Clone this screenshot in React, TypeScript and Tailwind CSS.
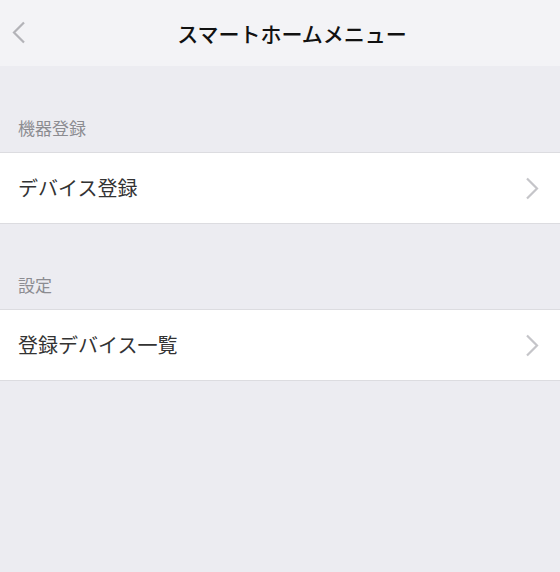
const FONT = { fontFamily: '"Noto Sans CJK JP", "Noto Sans", sans-serif' };

function Chevron({ dir, className }: { dir: "left" | "right"; className: string }) {
  return (
    <svg width="14" height="23" viewBox="0 0 14 23" className={className} fill="none">
      {dir === "left" ? (
        <path d="M12 1.5 L2 11.5 L12 21.5" stroke="currentColor" strokeWidth="2.2" />
      ) : (
        <path d="M2 1.5 L12 11.5 L2 21.5" stroke="currentColor" strokeWidth="2.2" />
      )}
    </svg>
  );
}

const sections = [
  { label: "機器登録", items: ["デバイス登録"], gap: "h-[86px] pt-[50px]" },
  { label: "設定", items: ["登録デバイス一覧"], gap: "h-[85px] pt-[49px]" },
];

export default function App() {
  return (
    <div className="min-h-[572px] w-[560px] bg-[#ececf1]" style={FONT}>
      {/* Header */}
      <div className="relative flex h-[66px] items-center justify-center bg-[#f3f3f6] pl-[24px]">
        <Chevron dir="left" className="absolute left-[12px] top-[21px] text-[#b3b3b8]" />
        <h1 className="text-[21px] font-medium leading-none text-[#111]">
          スマートホームメニュー
        </h1>
      </div>

      {sections.map((section) => (
        <div key={section.label}>
          <div className={`${section.gap} px-[18px] text-[17px] leading-[24px] text-[#8c8c91]`}>
            {section.label}
          </div>
          {section.items.map((item) => (
            <div
              key={item}
              className="flex h-[72px] items-center justify-between border-y border-[#dcdce0] bg-white pl-[18px] pr-[21px]"
            >
              <span className="text-[20px] leading-none text-[#333]">{item}</span>
              <Chevron dir="right" className="text-[#c5c5c9]" />
            </div>
          ))}
        </div>
      ))}
    </div>
  );
}
